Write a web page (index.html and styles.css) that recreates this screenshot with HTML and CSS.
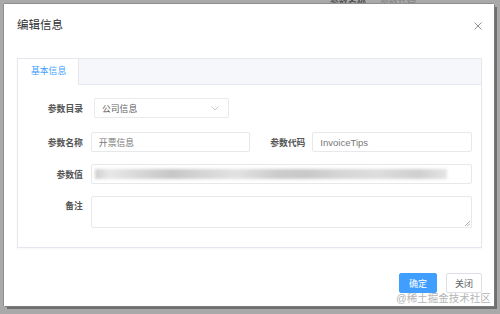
FILE: index.html
```html
<!DOCTYPE html>
<html lang="zh">
<head>
<meta charset="utf-8">
<link rel="stylesheet" href="styles.css">
</head>
<body>
<div class="backdrop">
  <div class="bg-text"><span class="bg-a">参数名称</span><span class="bg-b">参数代码</span></div>
  <div class="dialog">
    <div class="dialog-header">
      <span class="dialog-title">编辑信息</span>
      <svg class="close" width="8" height="8" viewBox="0 0 8 8"><path d="M0.5 0.5L7.5 7.5M7.5 0.5L0.5 7.5" stroke="#909399" stroke-width="1" fill="none"/></svg>
    </div>
    <div class="tabs">
      <div class="tabs-header"><div class="tab active">基本信息</div></div>
      <div class="tabs-content">
        <div class="row row-select">
          <label class="label">参数目录</label>
          <div class="select"><span>公司信息</span>
            <svg width="8" height="5" viewBox="0 0 8 5"><path d="M0.5 0.5L4 4L7.5 0.5" stroke="#c0c4cc" stroke-width="0.9" fill="none"/></svg>
          </div>
        </div>
        <div class="row row-two">
          <label class="label">参数名称</label>
          <div class="input half">开票信息</div>
          <label class="label label2">参数代码</label>
          <div class="input half2">InvoiceTips</div>
        </div>
        <div class="row">
          <label class="label">参数值</label>
          <div class="input full"><div class="blur"></div></div>
        </div>
        <div class="row row-textarea">
          <label class="label">备注</label>
          <div class="textarea">
            <svg class="grip" width="6" height="6" viewBox="0 0 6 6"><path d="M1 6L6 1M3.5 6L6 3.5" stroke="#999" stroke-width="0.8"/></svg>
          </div>
        </div>
      </div>
    </div>
    <div class="footer">
      <button class="btn primary">确定</button>
      <button class="btn">关闭</button>
    </div>
    <div class="watermark">@稀土掘金技术社区</div>
  </div>
</div>
</body>
</html>
```
FILE: styles.css
```css
html, body {
  margin: 0;
  padding: 0;
}
body {
  width: 500px;
  height: 314px;
  overflow: hidden;
  background: #a9a9a9;
  font-family: "Liberation Sans", "Noto Sans CJK SC", sans-serif;
}
.backdrop {
  position: relative;
  width: 500px;
  height: 314px;
  padding: 4px 0 0 4px;
  box-sizing: border-box;
}
.bg-text {
  position: absolute;
  top: -6px;
  left: 330px;
  font-size: 9px;
  font-weight: bold;
  color: #555;
  filter: blur(0.6px);
}
.bg-a { margin-right: 14px; }
.bg-b { color: #8a8a8a; }
.dialog {
  position: relative;
  width: 490px;
  height: 302px;
  background: #fff;
  box-shadow: 1px 1px 0 #7a7a7a, 3px 3px 0 #6f6f6f, 0 -1px 0 #8e8e8e, -1px 0 0 #8e8e8e;
}
.dialog-header {
  height: 54px;
  padding: 14px 12px 0 13px;
  box-sizing: border-box;
  display: flex;
  justify-content: space-between;
  align-items: flex-start;
}
.dialog-title {
  font-size: 11.5px;
  line-height: 15px;
  color: #303133;
}
.close {
  margin-top: 4px;
}
.tabs {
  margin: 0 12px 0 13px;
  height: 190px;
  border: 1px solid #e4e7ed;
  box-sizing: border-box;
  box-shadow: 0 1px 2px rgba(0,0,0,0.04);
}
.tabs-header {
  height: 26px;
  background: #f5f7fa;
  border-bottom: 1px solid #e4e7ed;
  box-sizing: border-box;
  display: flex;
}
.tab {
  width: 61px;
  height: 26px;
  box-sizing: border-box;
  padding-left: 13px;
  line-height: 25px;
  font-size: 8.8px;
  color: #409eff;
  background: #fff;
  border-right: 1px solid #e4e7ed;
}
.tabs-content {
  padding: 13px 9px 0 0;
}
.row {
  display: flex;
  align-items: center;
  margin-bottom: 12px;
}
.row-select {
  margin-bottom: 14px;
}
.label {
  width: 73px;
  box-sizing: border-box;
  padding-right: 8px;
  text-align: right;
  font-size: 8.8px;
  font-weight: bold;
  color: #555;
}
.label2 {
  width: 63px;
  padding-right: 7px;
}
.select {
  margin-left: 3px;
  width: 135px;
  height: 20px;
  box-sizing: border-box;
  border: 1px solid #e8eaee;
  border-radius: 2px;
  display: flex;
  align-items: center;
  justify-content: space-between;
  padding: 0 9px 0 7px;
  font-size: 8.8px;
  color: #606266;
}
.input {
  height: 20px;
  box-sizing: border-box;
  border: 1px solid #e6e8eb;
  border-radius: 2px;
  padding: 0 7px;
  display: flex;
  align-items: center;
  font-size: 8.8px;
  color: #777;
}
.half { width: 159px; }
.half2 { width: 160px; font-size: 9.5px; }
.full { width: 382px; padding: 0 3px; }
.blur {
  width: 352px;
  height: 10px;
  background: linear-gradient(90deg, #cfcfcf 0%, #e8e8e8 4%, #d8d8d8 12%, #c6c6c6 22%, #d4d4d4 30%, #e2e2e2 40%, #cbcbcb 52%, #c8c8c8 60%, #d6d6d6 70%, #dddddd 80%, #cfcfcf 92%, #e4e4e4 100%);
  filter: blur(1.5px);
}
.row-textarea {
  align-items: flex-start;
}
.row-textarea .label {
  line-height: 20px;
}
.textarea {
  position: relative;
  width: 382px;
  height: 32px;
  box-sizing: border-box;
  border: 1px solid #e6e8eb;
  border-radius: 2px;
}
.grip {
  position: absolute;
  right: 1px;
  bottom: 1px;
}
.footer {
  display: flex;
  justify-content: flex-end;
  gap: 9px;
  padding: 25px 12px 0 0;
}
.btn {
  height: 20px;
  width: 36px;
  margin: 0;
  padding: 0;
  border: 1px solid #dcdfe6;
  border-radius: 2px;
  background: #fff;
  color: #606266;
  font-family: "Liberation Sans", "Noto Sans CJK SC", sans-serif;
  font-size: 9px;
}
.btn.primary {
  width: 38px;
  background: #409eff;
  border-color: #409eff;
  color: #fff;
}
.watermark {
  position: absolute;
  left: 392px;
  top: 288px;
  font-size: 10.5px;
  line-height: 12px;
  color: #b5b5b5;
  white-space: nowrap;
}
```
